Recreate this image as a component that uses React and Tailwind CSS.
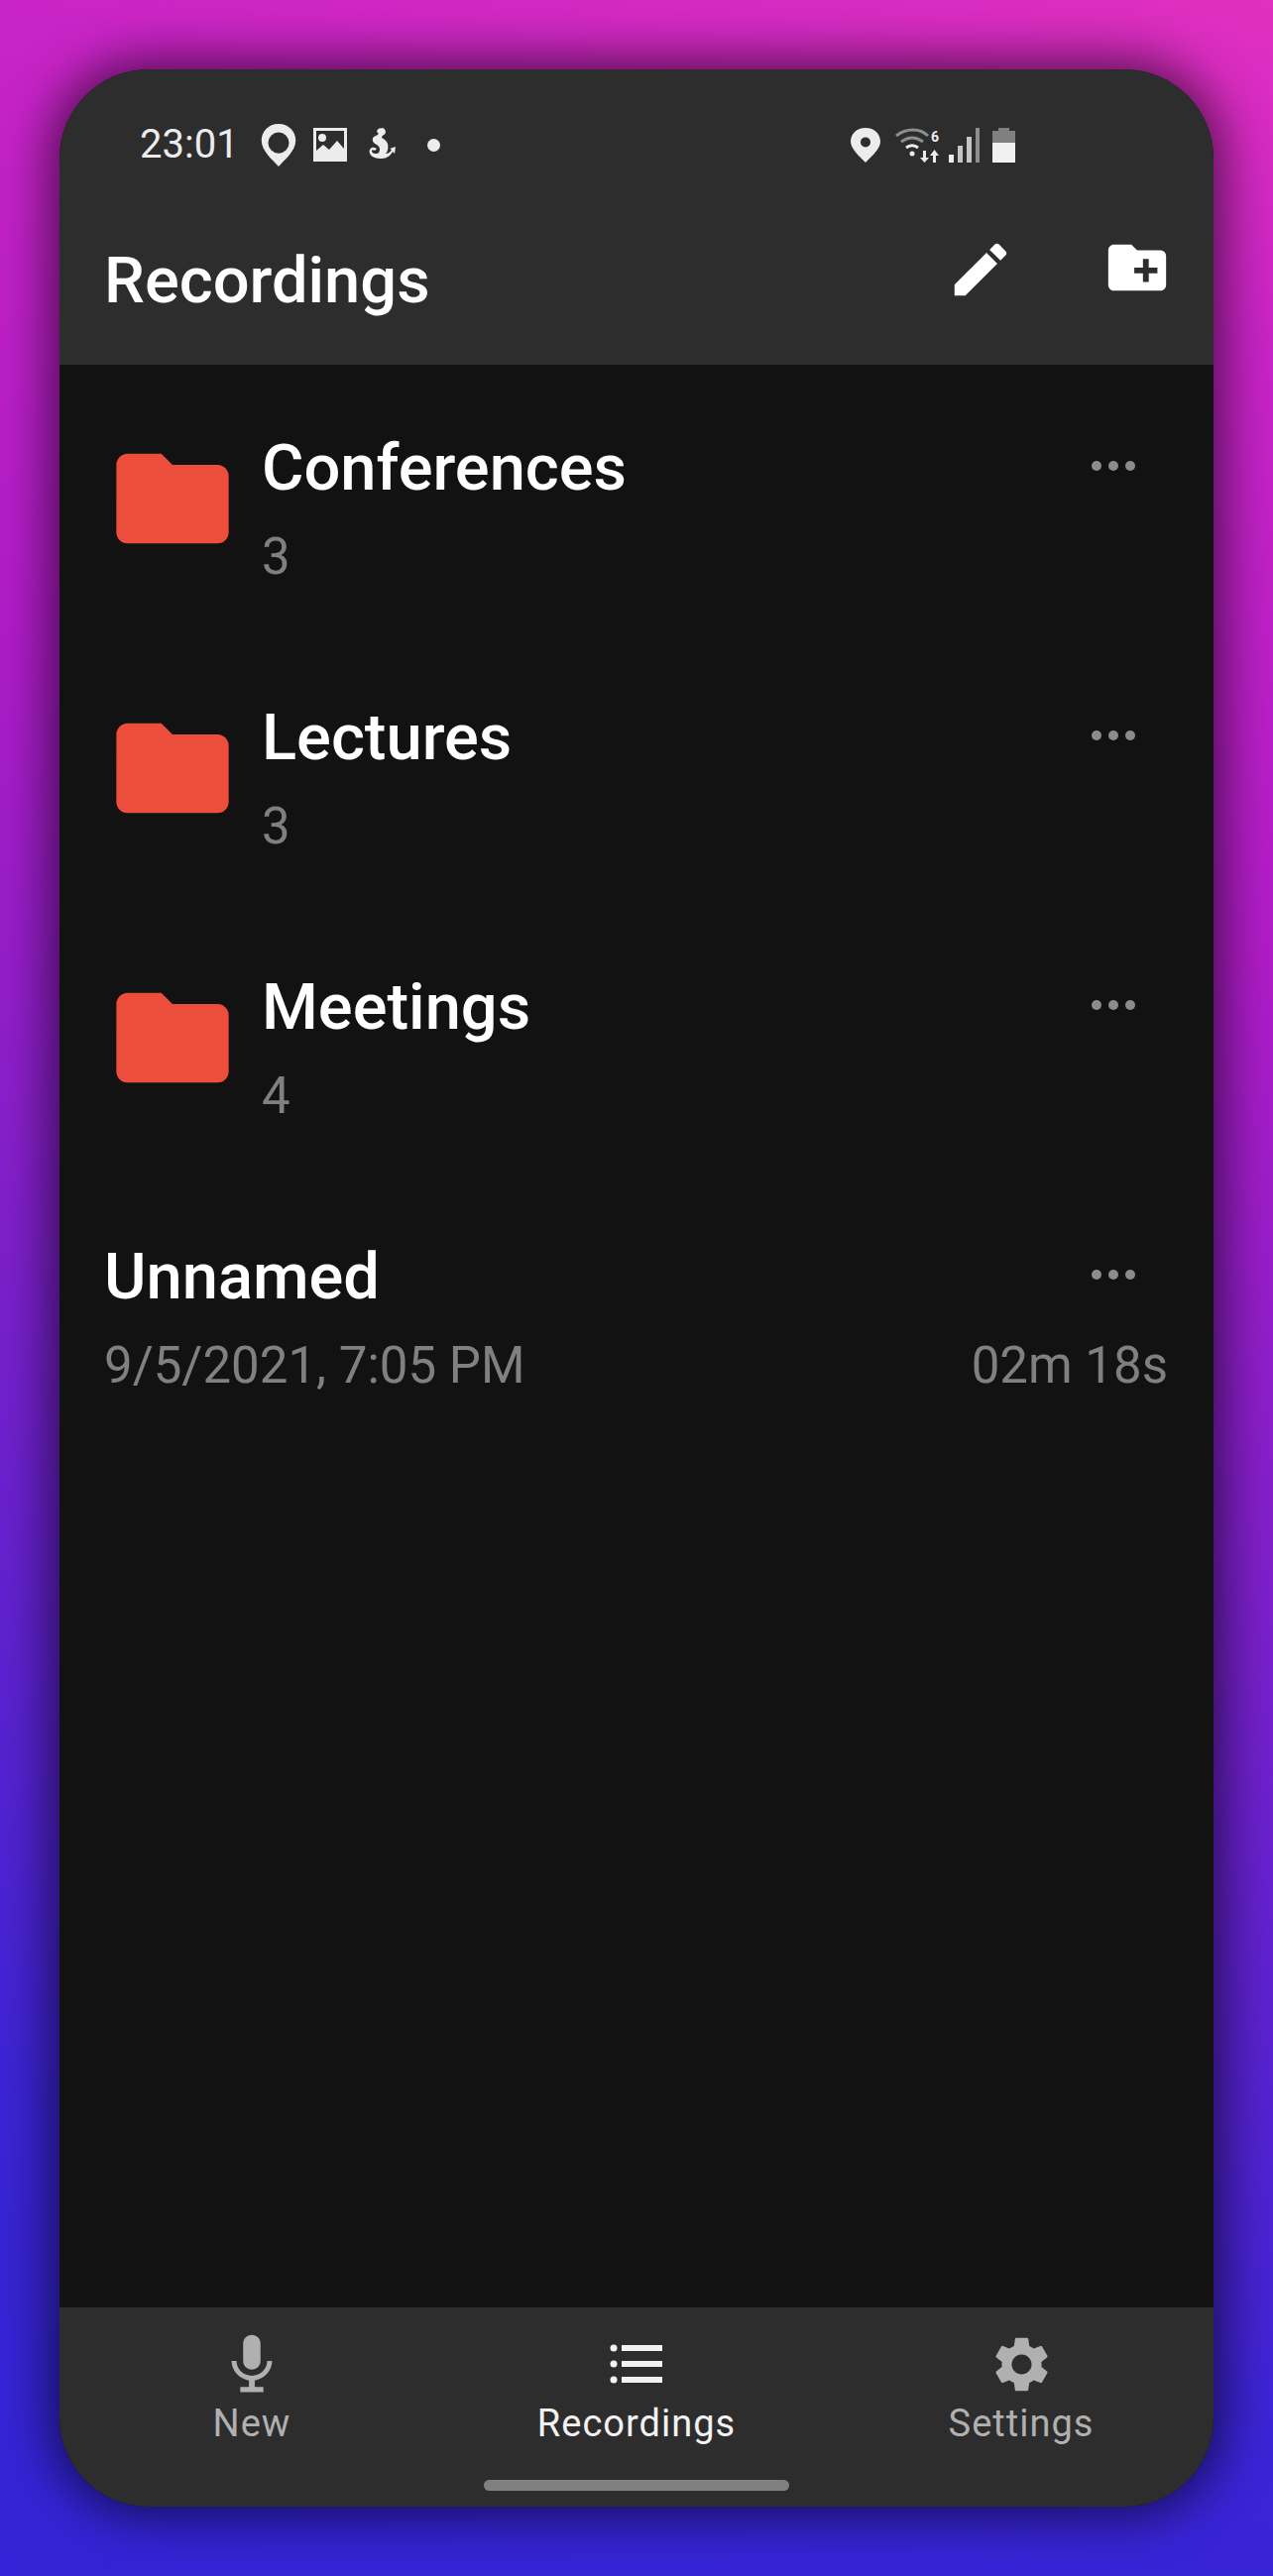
const font = { fontFamily: 'Roboto, sans-serif' };

function Dots() {
  return (
    <div className="flex gap-[7px] mr-[33px] mt-[-7px]">
      <div className="w-[10px] h-[10px] rounded-full bg-[#8c8c8c]" />
      <div className="w-[10px] h-[10px] rounded-full bg-[#8c8c8c]" />
      <div className="w-[10px] h-[10px] rounded-full bg-[#8c8c8c]" />
    </div>
  );
}

function FolderRow({ name, count }) {
  return (
    <div className="flex h-[272px] pr-[46px]">
      <svg viewBox="0 0 24 24" className="w-[136px] h-[136px] ml-[46px] mt-[7px] shrink-0" fill="#ec4e3b">
        <path d="M10 4H4c-1.1 0-1.99.9-1.99 2L2 18c0 1.1.9 2 2 2h16c1.1 0 2-.9 2-2V8c0-1.1-.9-2-2-2h-8l-2-2z" />
      </svg>
      <div className="flex-1 ml-[22px]">
        <div className="flex items-center justify-between h-[88px] pt-[2px]">
          <span className="text-[65px] font-medium text-white">{name}</span>
          <Dots />
        </div>
        <div className="h-[92px] flex items-center text-[51px] text-[#808080]">{count}</div>
      </div>
    </div>
  );
}

function NavItem({ label, active, children }) {
  return (
    <div className={`flex-1 flex flex-col items-center ${active ? 'text-[#f2f2f2]' : 'text-[#b0b0b0]'}`}>
      <div className="h-[70px] flex items-center justify-center">{children}</div>
      <span className="text-[38px] leading-[44px] tracking-[1px] mt-[3px]">{label}</span>
    </div>
  );
}

export default function App() {
  return (
    <div
      className="h-[2599px] pt-[70px] px-[60px] bg-[linear-gradient(195deg,#e030c0_0%,#c924c6_12%,#b01cc8_33%,#7a20cc_56%,#3a24d6_84%,#3224d6_100%)]"
      style={font}
    >
      <div className="h-[2459px] w-[1164px] rounded-[90px] overflow-hidden flex flex-col bg-[#121212] shadow-[0_0_50px_10px_rgba(0,0,0,0.6)]">
        {/* status bar */}
        <div className="h-[150px] shrink-0 bg-[#2d2d2d] flex items-center justify-between pl-[81px] pr-[200px] pt-[2px] text-[#ececec]">
          <div className="flex items-center">
            <span className="text-[40px] leading-none">23:01</span>
            <svg viewBox="0 0 24 24" className="w-[46px] h-[46px] ml-[17px]" fill="currentColor">
              <path fillRule="evenodd" d="M12 1C6.6 1 3 5 3 9.8 3 15.5 9 20 12 23.5c3-3.5 9-8 9-13.7C21 5 17.400 1 12 1zm0 4.500a5.500 5.500 0 1 1 0 11 5.500 5.500 0 0 1 0-11z" />
            </svg>
            <svg viewBox="0 0 34 34" className="w-[34px] h-[34px] ml-[12px]" fill="currentColor">
              <path fillRule="evenodd" d="M0 0h34v34H0zM3 3v20l7-6 6 5 8-9 7 8V3zM9 6a4 4 0 1 1 0 8 4 4 0 0 1 0-8z" />
            </svg>
            <svg viewBox="0 0 30 34" className="w-[30px] h-[34px] ml-[20px]" fill="currentColor">
              <path d="M15 0a4 4 0 0 1 3 6.500c-2 1-3 2-3 3.500 2 1 5 3 6 6 1 4 0 8-2 10 3 0 5-2 6-4l-2-1 6-2-1 7-2-2c-2 4-6 7-11 7s-10-1-12-5c-1-3 0-5 2-6 3-1 5 1 5 1l-2 2c-2-1-3-1-3 1 1 2 5 3 7 1 2-3 1-6-2-8-2-1-5-3-4-6 0-2 3-3 5-4 1-1 1-2-1-3a4 4 0 0 1 5-3.500z" />
            </svg>
            <div className="w-[13px] h-[13px] rounded-full bg-[#ececec] ml-[31px]" />
          </div>
          <div className="flex items-center">
            <svg viewBox="0 0 24 28" className="w-[30px] h-[35px]" fill="currentColor">
              <path fillRule="evenodd" d="M12 0C5 0 0 5 0 11c0 6 7 12 12 17 5-5 12-11 12-17C24 5 19 0 12 0zm0 7.500a4 4 0 1 1 0 8 4 4 0 0 1 0-8z" />
            </svg>
            <svg viewBox="0 0 48 36" className="w-[48px] h-[36px] ml-[14px]" fill="none">
              <path d="M2 9c10-8 24-8 32 0" stroke="#8d8d8d" strokeWidth="3" />
              <path d="M7 15c7-5 15-5 22 0" stroke="#8d8d8d" strokeWidth="3" />
              <path d="M12 21c4-3 8-3 12 0" stroke="#ececec" strokeWidth="3" />
              <circle cx="18" cy="27" r="2.500" fill="#ececec" />
              <path d="M29 24h3v7h3l-4.500 5-4.500-5h3zM39 36v-7h-3l4.500-6 4.500 6h-3v7z" fill="#ececec" />
              <text x="37" y="15" fontSize="14" fontWeight="700" fill="#ececec" style={font}>6</text>
            </svg>
            <div className="flex items-end gap-[4px] h-[35px] ml-[7px]">
              <div className="w-[5px] h-[8px] bg-[#ececec]" />
              <div className="w-[5px] h-[17px] bg-[#c4c4c4]" />
              <div className="w-[5px] h-[26px] bg-[#c4c4c4]" />
              <div className="w-[4px] h-[35px] bg-[#8d8d8d]" />
            </div>
            <div className="w-[23px] h-[35px] ml-[13px] flex flex-col items-center">
              <div className="w-[11px] h-[3px] bg-[#808080]" />
              <div className="w-full h-[12px] bg-[#808080]" />
              <div className="w-full flex-1 bg-[#f0f0f0]" />
            </div>
          </div>
        </div>

        {/* header */}
        <div className="h-[148px] shrink-0 bg-[#2d2d2d] flex justify-between pl-[45px] pr-[42px]">
          <span className="text-[65px] leading-[66px] font-medium text-white mt-[30px]">Recordings</span>
          <div className="flex text-white">
            <svg viewBox="0 0 24 24" className="w-[70px] h-[70px] mt-[17px]" fill="currentColor">
              <path d="M3 17.250V21h3.750L17.810 9.940l-3.750-3.750L3 17.250zM20.710 7.040c.39-.39.39-1.020 0-1.410l-2.340-2.340c-.39-.39-1.020-.39-1.410 0l-1.830 1.830 3.750 3.750 1.830-1.830z" />
            </svg>
            <svg viewBox="0 0 24 24" className="w-[70px] h-[70px] mt-[15px] ml-[88px]" fill="currentColor">
              <path d="M20 6h-8l-2-2H4c-1.110 0-1.990.89-1.990 2L2 18c0 1.110.89 2 2 2h16c1.110 0 2-.89 2-2V8c0-1.110-.89-2-2-2zm-1 8h-3v3h-2v-3h-3v-2h3V9h2v3h3v2z" />
            </svg>
          </div>
        </div>

        {/* list */}
        <div className="flex-1 pt-[60px]">
          <FolderRow name="Conferences" count="3" />
          <FolderRow name="Lectures" count="3" />
          <FolderRow name="Meetings" count="4" />
          <div className="pl-[45px] pr-[46px]">
            <div className="flex items-center justify-between h-[88px] pt-[2px]">
              <span className="text-[65px] font-medium text-white">Unnamed</span>
              <Dots />
            </div>
            <div className="flex items-center justify-between h-[92px] text-[51px] text-[#808080]">
              <span>9/5/2021, 7:05 PM</span>
              <span>02m 18s</span>
            </div>
          </div>
        </div>

        {/* bottom nav */}
        <div className="h-[201px] shrink-0 bg-[#2d2d2d] flex flex-col">
          <div className="flex pt-[22px]">
            <NavItem label="New">
              <svg viewBox="0 0 24 24" className="w-[70px] h-[70px]" fill="currentColor">
                <path d="M12 14c1.660 0 3-1.340 3-3V5c0-1.660-1.340-3-3-3S9 3.340 9 5v6c0 1.660 1.340 3 3 3zm5.300-3c0 3-2.540 5.100-5.300 5.100S6.700 14 6.700 11H5c0 3.410 2.720 6.230 6 6.720V20H8v1.800h8V20h-3v-2.280c3.280-.48 6-3.300 6-6.720h-1.700z" />
              </svg>
            </NavItem>
            <NavItem label="Recordings" active>
              <svg viewBox="0 0 54 40" className="w-[54px] h-[40px]" fill="currentColor">
                <circle cx="4" cy="4" r="3.500" />
                <circle cx="4" cy="20" r="3.500" />
                <circle cx="4" cy="36" r="3.500" />
                <rect x="12" y="1" width="41" height="6" />
                <rect x="12" y="17" width="41" height="6" />
                <rect x="12" y="33" width="41" height="6" />
              </svg>
            </NavItem>
            <NavItem label="Settings">
              <svg viewBox="0 0 24 24" className="w-[67px] h-[67px]" fill="currentColor">
                <path d="M19.140 12.940c.04-.3.06-.61.06-.94 0-.32-.02-.64-.07-.94l2.030-1.580c.18-.14.23-.41.12-.61l-1.920-3.320c-.12-.22-.37-.29-.59-.22l-2.390.96c-.5-.38-1.030-.7-1.620-.94l-.36-2.540c-.04-.24-.24-.41-.48-.41h-3.840c-.24 0-.43.17-.47.41l-.36 2.540c-.59.24-1.130.57-1.620.94l-2.390-.96c-.22-.08-.47 0-.59.22L2.740 8.870c-.12.21-.08.47.12.61l2.030 1.580c-.05.3-.09.63-.09.94s.02.64.07.94l-2.030 1.580c-.18.14-.23.41-.12.61l1.920 3.320c.12.22.37.29.59.22l2.390-.96c.5.38 1.030.7 1.620.94l.36 2.540c.05.24.24.41.48.41h3.840c.24 0 .44-.17.47-.41l.36-2.540c.59-.24 1.130-.56 1.620-.94l2.390.96c.22.08.47 0 .59-.22l1.920-3.320c.12-.22.07-.47-.12-.61l-2.010-1.580zM12 15.600c-1.980 0-3.600-1.620-3.600-3.600s1.620-3.600 3.600-3.600 3.600 1.620 3.600 3.600-1.620 3.600-3.600 3.600z" />
              </svg>
            </NavItem>
          </div>
          <div className="w-[308px] h-[11px] rounded-full bg-[#808080] mx-auto mt-[35px]" />
        </div>
      </div>
    </div>
  );
}
